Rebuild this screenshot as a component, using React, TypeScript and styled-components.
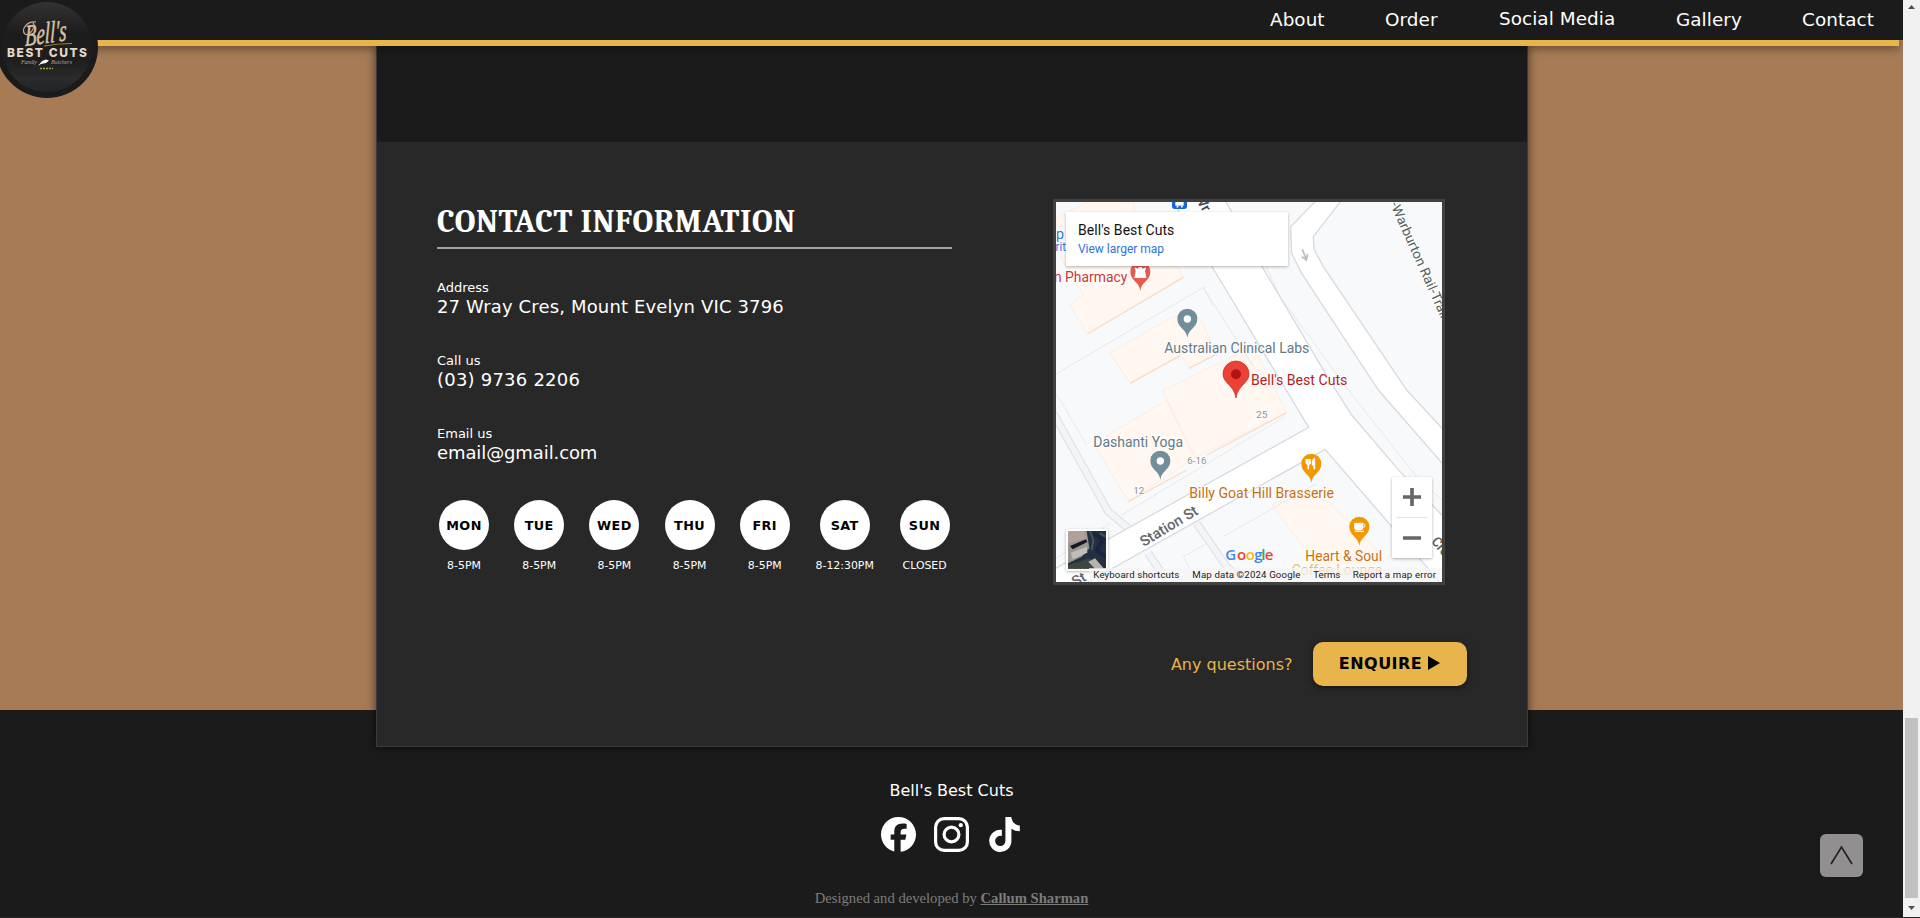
import React from "react";
import styled, { createGlobalStyle } from "styled-components";
import { FaFacebook, FaTiktok } from "react-icons/fa6";

const verdana = `Verdana, "DejaVu Sans", sans-serif`;

const GlobalStyle = createGlobalStyle`
  * { box-sizing: border-box; }
  html, body { margin: 0; overflow: hidden; background: #1b1b1b; }
`;

const Window = styled.div`
  display: flex;
  width: 1920px;
  height: 918px;
  overflow: hidden;
  border-bottom: 1px solid #26272b;
  font-family: ${verdana};
  color: #fff;
`;

const Page = styled.div`
  width: 1903px;
  height: 917px;
  position: relative;
  overflow: hidden;
  display: flex;
  flex-direction: column;
  background: #1b1b1b;
`;

const Header = styled.header`
  flex: none;
  height: 40px;
  position: relative;
  z-index: 3;
  background: #1b1b1b;
  display: flex;
  justify-content: flex-end;
  padding-right: 29px;
`;

const GoldRow = styled.div`
  flex: none;
  background: #a67b56;
`;

const GoldBar = styled.div`
  width: 1899px;
  height: 6px;
  background: #e8b44c;
  position: relative;
  z-index: 2;
  box-shadow: 0 2px 8px rgba(0, 0, 0, 0.5);
`;

const Nav = styled.nav`
  display: flex;
  gap: 60px;
`;

const NavLink = styled.a<{ $w: number; $up?: boolean }>`
  width: ${(p) => p.$w}px;
  white-space: nowrap;
  font-size: 18.4px;
  letter-spacing: 0.05px;
  line-height: 22px;
  padding-top: ${(p) => (p.$up ? 8 : 9)}px;
`;

const Badge = styled.div`
  position: absolute;
  left: -4px;
  top: -4px;
  z-index: 4;
`;

const Backdrop = styled.main`
  flex: none;
  height: 664px;
  background: #a67b56;
  padding: 0 375px 0 376px;
`;

const Panel = styled.section`
  position: relative;
  z-index: 1;
  height: 701px;
  border: 1px solid #3a3a3a;
  border-top: 0;
  background: #282828;
  box-shadow: 0 0 9px rgba(0, 0, 0, 0.6);
`;

const PanelHead = styled.div`
  height: 96px;
  background: #1b1b1b;
`;

const Columns = styled.div`
  display: flex;
  justify-content: space-between;
  padding: 57px 82px 0 60px;
`;

const Info = styled.div`
  width: 515px;
`;

const Title = styled.h2`
  margin: 0;
  height: 50px;
  padding-top: 5px;
  border-bottom: 2px solid #a3a0a0;
  font-family: Cambria, "DejaVu Serif Condensed", "DejaVu Serif", serif;
  font-size: 32px;
  line-height: 36px;
  letter-spacing: 0.55px;
  white-space: nowrap;
`;

const Field = styled.div<{ $first?: boolean }>`
  height: 73px;
  margin-top: ${(p) => (p.$first ? 31 : 0)}px;
`;

const Label = styled.div`
  font-size: 13px;
  line-height: 16px;
`;

const Value = styled.div<{ $ls?: number }>`
  font-size: 18px;
  line-height: 22px;
  white-space: nowrap;
  letter-spacing: ${(p) => p.$ls ?? 0}px;
`;

const Days = styled.div`
  display: flex;
  gap: 21.2px;
  padding-top: 1px;
`;

const Day = styled.div<{ $w?: number }>`
  flex: none;
  width: ${(p) => p.$w ?? 54}px;
  display: flex;
  flex-direction: column;
  align-items: center;
  font-size: 10.9px;
  line-height: 14px;
  white-space: nowrap;
`;

const Disc = styled.div`
  width: 50px;
  height: 50px;
  border-radius: 50%;
  background: #fff;
  color: #000;
  font-weight: bold;
  font-size: 12.8px;
  letter-spacing: 0.4px;
  display: flex;
  align-items: center;
  justify-content: center;
  padding-top: 1px;
  margin-bottom: 9px;
`;

const MapFrame = styled.div`
  width: 392px;
  height: 386px;
  border: 3px solid #414141;
`;

const Ask = styled.div`
  display: flex;
  justify-content: flex-end;
  align-items: center;
  gap: 20.5px;
  padding: 57px 60px 0 0;
  font-size: 16px;
  color: #e8b44c;
`;

const Enquire = styled.button`
  width: 154px;
  height: 44px;
  border: 0;
  border-radius: 10px;
  background: #e8b44c;
  color: #000;
  font: bold 16px ${verdana};
  letter-spacing: 0.45px;
  display: flex;
  align-items: center;
  justify-content: center;
  gap: 6px;
  padding: 0 7px 2px 6px;
  box-shadow: 0 2px 6px rgba(0, 0, 0, 0.5);
`;

const Footer = styled.footer`
  padding-top: 71px;
  display: flex;
  flex-direction: column;
  align-items: center;
  font-size: 16px;
  line-height: 20px;
`;

const Socials = styled.div`
  display: flex;
  gap: 18px;
  margin-top: 16px;
  height: 35px;
`;

const Credit = styled.p`
  margin: 35px 0 0;
  font: 14.65px/22px "Liberation Serif", serif;
  color: #7d7d7d;
  a { font-weight: bold; text-decoration: underline; }
`;

const ToTop = styled.button`
  position: absolute;
  left: 1820px;
  top: 834px;
  width: 43px;
  height: 43px;
  padding: 0;
  border: 0;
  border-radius: 6px;
  background: #918f8f;
`;

const Scrollbar = styled.div`
  width: 17px;
  height: 917px;
  background: #f1f1f1;
  display: flex;
  flex-direction: column;
  align-items: center;
`;

const Track = styled.div`
  flex: 1;
  padding-top: 701px;
`;

const Thumb = styled.div`
  width: 13px;
  height: 180px;
  background: #c1c1c1;
`;

const Svg = styled.svg`
  display: block;
  flex: none;
`;

const Logo = () => (
  <Svg width="102" height="102" viewBox="-4 -4 102 102">
    <defs>
      <linearGradient id="lg" x1="0" y1="0" x2="0" y2="1">
        <stop offset="0" stopColor="#343233" />
        <stop offset=".35" stopColor="#1d1c1d" />
        <stop offset=".65" stopColor="#1e1e1f" />
        <stop offset=".85" stopColor="#2a2b2c" />
        <stop offset="1" stopColor="#222324" />
      </linearGradient>
    </defs>
    <circle cx="47" cy="47" r="51" fill="#1b1b1b" />
    <circle cx="47" cy="47" r="45" fill="url(#lg)" />
    <g transform="translate(25 46) rotate(-8) skewX(-8)" fontFamily="Liberation Serif, serif" fontStyle="italic" fontSize="30">
      <text textLength="42" lengthAdjust="spacingAndGlyphs" fill="#d9c4a4" stroke="#d9c4a4" strokeWidth=".5">Bell's</text>
    </g>
    <path d="M36 22C26 21 21 30 25 34C30 37 36 26 33 23" fill="none" stroke="#c7ac84" strokeWidth="1.200" />
    <path d="M44 46Q58 43.500 72 43.500" stroke="#b08c2e" strokeWidth="1.200" fill="none" />
    <text x="7" y="57.300" fontFamily="Inter, sans-serif" fontWeight="800" fontSize="12" textLength="80" lengthAdjust="spacing" fill="#e4d8c6">BEST CUTS</text>
    <text x="21" y="64" fontFamily="Liberation Serif, serif" fontStyle="italic" fontSize="6" textLength="16" fill="#a8a49c">Family</text>
    <text x="51" y="64" fontFamily="Liberation Serif, serif" fontStyle="italic" fontSize="6" textLength="21" fill="#a8a49c">Butchers</text>
    <path d="M38 66L42 61L46 59.500L49 60.500L46 63L41 64Z" fill="#fff" />
    <path d="M40 68.500h13" stroke="#a8a23a" strokeWidth="1.500" strokeDasharray="2 1" />
  </Svg>
);

const Pin = ({ x, y, color, children }: { x: number; y: number; color: string; children?: React.ReactNode }) => (
  <g transform={`translate(${x} ${y})`}>
    <path d="M0 86C-4 58-30 56-30 29A30 30 0 0 1 30 29C30 56 4 58 0 86Z" fill={color} />
    {children ?? <circle cy="30" r="11" fill="#fff" />}
  </g>
);

const T = ({ x, y, w, s = 42, c, a, bold, children }: { x: number; y: number; w: number; s?: number; c: string; a?: number; bold?: boolean; children: string }) => (
  <text x={x} y={y} fontSize={s} fontWeight={bold ? 500 : 400} textLength={w} lengthAdjust="spacingAndGlyphs" fill={c} stroke="#fff" strokeWidth="4" paintOrder="stroke" transform={a ? `rotate(${a} ${x} ${y})` : undefined}>{children}</text>
);

const MapView = () => (
  <Svg width="386" height="380" viewBox="48 36 1158 1140" preserveAspectRatio="none" fontFamily="Roboto, sans-serif">
    <defs>
      <filter id="sh" x="-10%" y="-10%" width="120%" height="130%">
        <feDropShadow dx="0" dy="3" stdDeviation="5" floodOpacity=".3" />
      </filter>
    </defs>
    <rect x="48" y="36" width="1158" height="1140" fill="#f8f9fb" />
    <g fill="#fff7f0" stroke="#fdeee2" strokeWidth="3">
      <path d="M48 85L140 36H280L290 110H48Z" />
      <path d="M60 200L130 315L90 345L142 432L430 262L385 190Z" />
      <path d="M210 488L400 380L480 385L530 492L447 535L422 497L270 580Z" />
      <path d="M170 775L210 730L380 632L465 802L265 935Z" />
      <path d="M368 602L640 470L740 668L465 802Z" />
      <path d="M697 945L780 900L870 940L1010 1080L960 1176H870Z" />
    </g>
    <path d="M142 432L430 262M270 580L420 497M447 535L530 492M500 795L740 668M265 935L440 840" stroke="#f9dcc6" strokeWidth="4" />
    <g fill="none" stroke="#e6e8eb" strokeWidth="3">
      <path d="M48 552L490 292L640 530M490 292L520 350M48 610L140 765M245 975L735 680M620 100L720 320L925 600L1130 860L1206 930M690 290L870 570" />
      <path d="M550 1040L830 880M430 1100L500 1060M430 1100L470 1176M880 800L1056 985M48 1105L210 1000" />
    </g>
    <path d="M40 670L205 965L265 1015M325 1090L375 1165M470 1000L560 1130L610 1176" fill="none" stroke="#dcdfe3" strokeWidth="24" />
    <path d="M40 670L205 965L265 1015M325 1090L375 1165M470 1000L560 1130L610 1176" fill="none" stroke="#f3f4f6" strokeWidth="18" />
    <g fill="#fff" stroke="#d8dadf" strokeWidth="4">
      <path d="M400 36L515 228L806 712L30 1145V1240L855 778L1220 1200V990L1080 845L935 675L865 565L665 228L555 30Z" />
      <path d="M830 30L752 110L755 190L785 250L1015 600L1220 835V730L1100 600L850 230L822 178L820 140L905 30Z" />
    </g>
    <path d="M787 178L798 206M785 200L799 210L803 192" fill="none" stroke="#b9bbc0" strokeWidth="5" />
    <rect x="396" y="10" width="45" height="47" rx="8" fill="#1a66d6" />
    <path d="M406 36H431V47H406Z" fill="#fff" /><path d="M410 50h5M423 50h5" stroke="#fff" strokeWidth="5" />
    <T x={462} y={20} w={56} c="#45484c" a={60} bold>Wr</T>
    <T x={48} y={148} w={24} c="#3676d6">p</T>
    <T x={28} y={184} w={50} s={36} c="#3676d6">arit</T>
    <T x={42} y={277} w={220} c="#c5383b">n Pharmacy</T>
    <Pin x={301} y={216} color="#e75a50"><path d="M-18 15L-8 20L-4 15H4L8 20L18 15L14 27L18 48H-18L-14 27Z" fill="#fff" /></Pin>
    <Pin x={442} y={357} color="#728e9a" />
    <T x={373} y={489} w={435} c="#607985">Australian Clinical Labs</T>
    <path d="M588 624C582 585 549 580 549 552A39 39 0 0 1 627 552C627 580 594 585 588 624Z" fill="#ea4335" stroke="#c5221f" strokeWidth="2" />
    <circle cx="588" cy="553" r="15" fill="#b31412" />
    <T x={633} y={585} w={289} c="#b01f24">Bell's Best Cuts</T>
    <T x={648} y={685} w={34} s={29} c="#8c8f94">25</T>
    <T x={442} y={823} w={57} s={29} c="#8c8f94">6-16</T>
    <T x={280} y={911} w={33} s={29} c="#8c8f94">12</T>
    <T x={160} y={771} w={269} c="#607985">Dashanti Yoga</T>
    <Pin x={361} y={783} color="#728e9a" />
    <Pin x={814} y={792} color="#f29900"><path d="M-10 15V27M-4 15V27M-15 15V24Q-15 30-9 30Q-3 30-3 24M-9 28V46M9 46V15Q3 18 4 32H9" fill="none" stroke="#fff" strokeWidth="5" /></Pin>
    <T x={448} y={924} w={434} c="#c7700f">Billy Goat Hill Brasserie</T>
    <Pin x={958} y={981} color="#f29900"><path d="M-14 19H10V33Q10 39 3 39H-7Q-14 39-14 33ZM-14 43H14" fill="#fff" stroke="#fff" strokeWidth="3" /><circle cx="12" cy="26" r="5" fill="none" stroke="#fff" strokeWidth="3" /></Pin>
    <T x={796} y={1113} w={230} c="#c7700f">Heart &amp; Soul</T>
    <T x={755} y={1155} w={272} c="#eeb67b">Coffee Lounge</T>
    <T x={311} y={1071} w={194} s={44} c="#63666a" a={-31} bold>Station St</T>
    <T x={104} y={1190} w={42} c="#63666a" a={-28} bold>St</T>
    <T x={1172} y={1055} w={60} c="#54575b" a={50} bold>Cre</T>
    <T x={1050} y={42} w={378} s={40} c="#54605a" a={66}>-Warburton Rail-Trail</T>
    <g filter="url(#sh)">
      <rect x="78" y="66" width="666" height="162" rx="4" fill="#fff" />
      <rect x="1056" y="861" width="120" height="243" rx="5" fill="#fff" />
      <rect x="78" y="1017" width="126" height="125" rx="5" fill="#fff" />
    </g>
    <text x="114" y="135" fontSize="42" textLength="289" fill="#111">Bell's Best Cuts</text>
    <text x="114" y="189" fontSize="36" textLength="258" fill="#2c73dc">View larger map</text>
    <path d="M1070 982H1161" stroke="#e0e0e0" strokeWidth="3" />
    <path d="M1089 921H1143M1116 894V948M1089 1044H1143" stroke="#666" strokeWidth="11" />
    <rect x="84" y="1023" width="114" height="113" fill="#25303f" />
    <path d="M84 1023H140L148 1075L125 1100L84 1120Z" fill="#9b9793" />
    <path d="M84 1023H130L140 1045L84 1060Z" fill="#b0a299" />
    <path d="M90 1068L138 1048L142 1056L98 1078Z" fill="#15181e" />
    <path d="M92 1088L140 1070L142 1088L98 1108Z" fill="#c2bdb8" />
    <path d="M84 1125L150 1105L175 1136H84Z" fill="#3a463f" />
    <path d="M145 1115L165 1105L192 1136H165Z" fill="#b7b4b0" />
    <path d="M160 1030L190 1050L170 1080L195 1100" fill="none" stroke="#1a2342" strokeWidth="12" />
    <path d="M150 1023L160 1050L155 1080M180 1030L196 1040" fill="none" stroke="#46535a" strokeWidth="6" />
    <g fontSize="45" fontFamily="Open Sans, sans-serif" fontWeight="600">
      <text y="1111"><tspan x="556" fill="#4285f4">G</tspan><tspan x="591" fill="#ea4335">o</tspan><tspan x="617" fill="#fbbc05">o</tspan><tspan x="643" fill="#4285f4">g</tspan><tspan x="664" fill="#34a853">l</tspan><tspan x="674" fill="#ea4335">e</tspan></text>
    </g>
    <rect x="147" y="1134" width="1059" height="42" fill="#f5f5f5" opacity=".7" />
    <g fontSize="29" fill="#222">
      <text x="160" y="1164" textLength="258">Keyboard shortcuts</text>
      <text x="457" y="1164" textLength="324">Map data ©2024 Google</text>
      <text x="820" y="1164" textLength="81">Terms</text>
      <text x="938" y="1164" textLength="250">Report a map error</text>
    </g>
  </Svg>
);

const hours = [["MON", "8-5PM"], ["TUE", "8-5PM"], ["WED", "8-5PM"], ["THU", "8-5PM"], ["FRI", "8-5PM"], ["SAT", "8-12:30PM"], ["SUN", "CLOSED"]];

export default function App() {
  return (
    <>
      <GlobalStyle />
      <Window>
        <Page>
          <Header>
            <Nav>
              <NavLink $w={55}>About</NavLink>
              <NavLink $w={54}>Order</NavLink>
              <NavLink $w={117} $up>Social Media</NavLink>
              <NavLink $w={66}>Gallery</NavLink>
              <NavLink $w={72}>Contact</NavLink>
            </Nav>
          </Header>
          <GoldRow><GoldBar /></GoldRow>
          <Badge><Logo /></Badge>
          <Backdrop>
            <Panel>
              <PanelHead />
              <Columns>
                <Info>
                  <Title>CONTACT INFORMATION</Title>
                  <Field $first><Label>Address</Label><Value $ls={0.15}>27 Wray Cres, Mount Evelyn VIC 3796</Value></Field>
                  <Field><Label>Call us</Label><Value $ls={0.22}>(03) 9736 2206</Value></Field>
                  <Field><Label>Email us</Label><Value $ls={-0.1}>email@gmail.com</Value></Field>
                  <Days>
                    {hours.map(([d, h]) => (
                      <Day key={d} $w={d === "SAT" ? 63.5 : 54}><Disc>{d}</Disc>{h}</Day>
                    ))}
                  </Days>
                </Info>
                <MapFrame><MapView /></MapFrame>
              </Columns>
              <Ask>
                <span>Any questions?</span>
                <Enquire>
                  ENQUIRE
                  <Svg width="12" height="14" viewBox="0 0 12 14"><path d="M0 0L12 7L0 14Z" /></Svg>
                </Enquire>
              </Ask>
            </Panel>
          </Backdrop>
          <Footer>
            <span>Bell's Best Cuts</span>
            <Socials>
              <FaFacebook size={35} />
              <Svg width="35" height="35" viewBox="0 0 35 35" fill="none" stroke="#fff">
                <rect x="1.600" y="1.600" width="31.800" height="31.800" rx="8.500" strokeWidth="3.200" />
                <circle cx="17.500" cy="17.500" r="7.400" strokeWidth="3.200" />
                <circle cx="26.800" cy="8.200" r="2.100" fill="#fff" stroke="none" />
              </Svg>
              <FaTiktok size={35} />
            </Socials>
            <Credit>Designed and developed by <a>Callum Sharman</a></Credit>
          </Footer>
          <ToTop>
            <Svg width="43" height="43" fill="none" stroke="#222" strokeWidth="1.700"><path d="M11 30L21.500 13L32 30" /></Svg>
          </ToTop>
        </Page>
        <Scrollbar>
          <Svg width="17" height="17"><path d="M5 9L8.500 5L12 9Z" fill="#505050" /></Svg>
          <Track><Thumb /></Track>
          <Svg width="17" height="17"><path d="M5 6L8.500 10L12 6Z" fill="#505050" /></Svg>
        </Scrollbar>
      </Window>
    </>
  );
}
